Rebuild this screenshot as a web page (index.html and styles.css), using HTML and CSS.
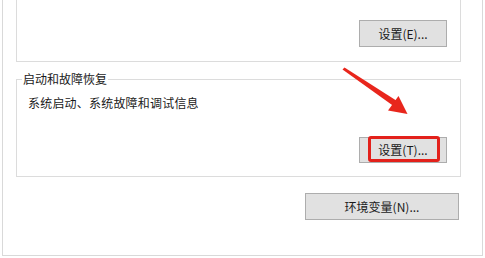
FILE: index.html
```html
<!DOCTYPE html>
<html lang="zh-CN">
<head>
<meta charset="utf-8">
<title>系统属性</title>
<link rel="stylesheet" href="styles.css">
</head>
<body>
<div class="panel">
  <div class="group group-top">
    <button class="btn btn-small">设置(E)...</button>
  </div>
  <fieldset class="group group-startup">
    <legend class="legend">启动和故障恢复</legend>
    <p class="desc">系统启动、系统故障和调试信息</p>
    <div class="row">
      <button class="btn btn-small btn-marked">设置(T)...<span class="mark"></span></button>
    </div>
  </fieldset>
  <div class="row row-env">
    <button class="btn btn-wide">环境变量(N)...</button>
  </div>
</div>
<svg class="arrow" width="485" height="258" viewBox="0 0 485 258">
  <path d="M342.5 69.5 L344.5 67.5 L397 101 L393.5 106 Z" fill="#e8261c"/>
  <polygon points="398.5,96 407.5,114 388,110.5" fill="#e8261c"/>
</svg>
</body>
</html>
```
FILE: styles.css
```css
html, body {
  margin: 0;
  padding: 0;
  background: #ffffff;
}
body {
  width: 485px;
  height: 258px;
  overflow: hidden;
  position: relative;
  font-family: "Noto Sans CJK SC", "Noto Sans", sans-serif;
  font-size: 12px;
  line-height: 16px;
  color: #1a1a1a;
}
.panel {
  box-sizing: border-box;
  margin-left: 2px;
  width: 481px;
  height: 256px;
  border: 1px solid #d9d9d9;
  border-top: none;
}
.group {
  box-sizing: border-box;
  margin: 0 0 0 13px;
  width: 445px;
  border: 1px solid #dcdcdc;
}
.group-top {
  border-top: none;
  height: 62px;
  padding: 20px 13px 0 0;
  display: flex;
  justify-content: flex-end;
  align-items: flex-start;
}
.group-startup {
  margin-top: 9px;
  padding: 0 13px 13px 11px;
  min-width: 0;
}
.legend {
  margin-left: -6px;
  padding: 0 1px;
  line-height: 16px;
  color: #1a1a1a;
}
.desc {
  margin: 8px 0 0 0;
  line-height: 16px;
  letter-spacing: 0.2px;
}
.row {
  display: flex;
  justify-content: flex-end;
}
.group-startup .row {
  margin-top: 26px;
}
.row-env {
  margin-top: 16px;
  padding-right: 23px;
}
.btn {
  box-sizing: border-box;
  font-family: inherit;
  font-size: 12px;
  line-height: 16px;
  color: #1a1a1a;
  background: #e1e1e1;
  border: 1px solid #adadad;
  border-radius: 0;
  padding: 0;
  margin: 0;
  display: flex;
  align-items: center;
  justify-content: center;
}
.btn-small {
  width: 88px;
  height: 27px;
}
.btn-marked {
  height: 26px;
  position: relative;
}
.btn-wide {
  width: 154px;
  height: 27px;
}
.mark {
  position: absolute;
  left: 8px;
  top: -2px;
  width: 72px;
  height: 26px;
  box-sizing: border-box;
  border: 3px solid #e3211b;
  border-radius: 3px;
}
.arrow {
  position: absolute;
  left: 0;
  top: 0;
  pointer-events: none;
}
```
